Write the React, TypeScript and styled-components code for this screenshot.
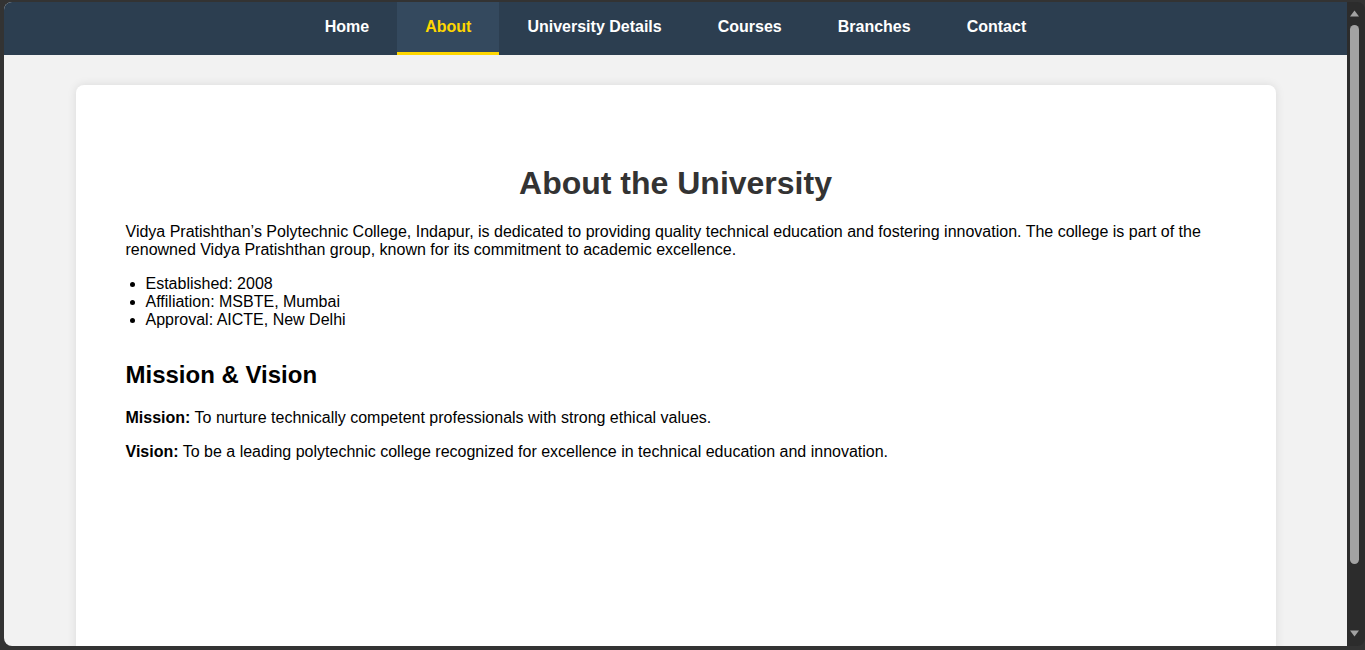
import React from "react";
import styled, { createGlobalStyle } from "styled-components";

const Global = createGlobalStyle`
  html, body { margin: 0; padding: 0; overflow: hidden; background: #333333; }
  * { box-sizing: border-box; }
`;

const Frame = styled.div`
  width: 1365px;
  height: 650px;
  background: #333333;
  display: grid;
  grid-template-columns: 1343px 18px;
  grid-template-rows: 644px;
  padding: 2px 0 4px 4px;
  font-family: "Liberation Sans", Arial, sans-serif;
`;

const Viewport = styled.div`
  background: #f2f2f2;
  border-radius: 8px 0 0 8px;
  overflow: hidden;
`;

const ScrollTrack = styled.div`
  background: #2c2c2c;
  border-radius: 0 8px 8px 0;
  display: flex;
  flex-direction: column;
  align-items: center;
  padding: 8px 3px 9px 0;
`;

const Arrow = styled.svg`
  width: 9px;
  height: 7px;
  display: block;
  flex: none;
`;

const Thumb = styled.div`
  width: 9px;
  height: 539px;
  margin-top: 8px;
  border-radius: 5px;
  background: #a3a3a3;
  flex: none;
`;

const Spacer = styled.div`
  flex: 1;
`;

const Nav = styled.nav`
  background: #2c3e50;
  height: 53px;
`;

const NavList = styled.ul`
  list-style: none;
  margin: 0;
  padding: 0;
  display: flex;
  justify-content: center;
`;

const NavLink = styled.a<{ $active?: boolean }>`
  display: block;
  padding: 15.5px 28px 16px;
  border-bottom: 3px solid ${(p) => (p.$active ? "#ffd700" : "transparent")};
  background: ${(p) => (p.$active ? "#34495e" : "transparent")};
  color: ${(p) => (p.$active ? "#ffd700" : "#ffffff")};
  font-weight: bold;
  font-size: 16px;
  text-decoration: none;
  cursor: pointer;
`;

const Card = styled.main`
  width: 1200px;
  min-height: 700px;
  margin: 30px auto 0;
  padding: 50px;
  background: #ffffff;
  border-radius: 8px;
  box-shadow: 0 0 10px rgba(0, 0, 0, 0.1);
  color: #000;
  font-size: 16px;
`;

const Title = styled.h1`
  margin: 30px 0 21.44px;
  text-align: center;
  font-size: 32px;
  font-weight: bold;
  color: #333333;
`;

const Para = styled.p`
  margin: 16px 0;
  line-height: normal;
`;

const List = styled.ul`
  margin: 16px 0;
  padding-left: 20px;
`;

const SubTitle = styled.h2`
  margin: 32px 0 19.92px;
  font-size: 24px;
  font-weight: bold;
`;

const links = ["Home", "About", "University Details", "Courses", "Branches", "Contact"];

export default function App() {
  return (
    <>
      <Global />
      <Frame>
        <Viewport>
          <Nav>
            <NavList>
              {links.map((l) => (
                <li key={l}>
                  <NavLink $active={l === "About"}>{l}</NavLink>
                </li>
              ))}
            </NavList>
          </Nav>
          <Card>
            <Title>About the University</Title>
            <Para>
              Vidya Pratishthan’s Polytechnic College, Indapur, is dedicated to providing quality
              technical education and fostering innovation. The college is part of the renowned Vidya
              Pratishthan group, known for its commitment to academic excellence.
            </Para>
            <List>
              <li>Established: 2008</li>
              <li>Affiliation: MSBTE, Mumbai</li>
              <li>Approval: AICTE, New Delhi</li>
            </List>
            <SubTitle>Mission &amp; Vision</SubTitle>
            <Para>
              <strong>Mission:</strong> To nurture technically competent professionals with strong
              ethical values.
            </Para>
            <Para>
              <strong>Vision:</strong> To be a leading polytechnic college recognized for excellence in
              technical education and innovation.
            </Para>
          </Card>
        </Viewport>
        <ScrollTrack>
          <Arrow viewBox="0 0 9 7">
            <polygon points="4.5,0.5 9,6.5 0,6.5" fill="#a3a3a3" />
          </Arrow>
          <Thumb />
          <Spacer />
          <Arrow viewBox="0 0 9 7">
            <polygon points="0,0.5 9,0.5 4.5,6.5" fill="#a3a3a3" />
          </Arrow>
        </ScrollTrack>
      </Frame>
    </>
  );
}
